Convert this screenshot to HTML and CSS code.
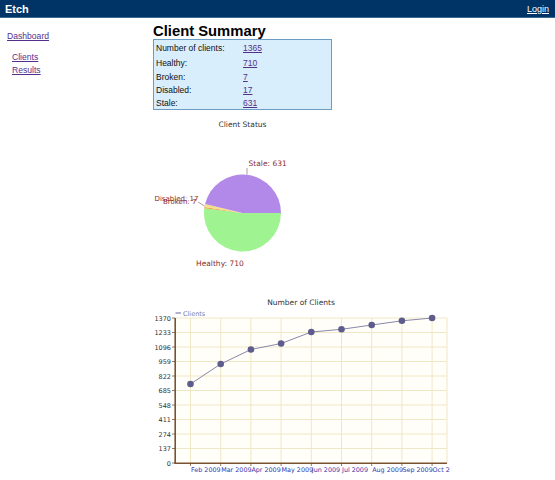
FILE: index.html
```html
<!DOCTYPE html>
<html>
<head>
<meta charset="utf-8">
<title>Etch</title>
<link rel="stylesheet" href="styles.css">
</head>
<body>
<header class="topbar">
  <span class="brand">Etch</span>
  <a class="login" href="#">Login</a>
</header>
<div class="layout">
  <nav class="side">
    <a class="nav-link" href="#">Dashboard</a>
    <ul class="subnav">
      <li><a class="nav-link" href="#">Clients</a></li>
      <li><a class="nav-link" href="#">Results</a></li>
    </ul>
  </nav>
  <main class="main">
    <h2 class="title">Client Summary</h2>
    <div class="summary">
      <div class="row r1"><span>Number of clients:</span><a href="#">1365</a></div>
      <div class="row r2"><span>Healthy:</span><a href="#">710</a></div>
      <div class="row r3"><span>Broken:</span><a href="#">7</a></div>
      <div class="row r4"><span>Disabled:</span><a href="#">17</a></div>
      <div class="row r5"><span>Stale:</span><a href="#">631</a></div>
    </div>
    <svg class="chart" width="297" height="178" viewBox="153 110 297 178">
      <text class="ctitle" x="242.5" y="127" text-anchor="middle">Client Status</text>
      <path d="M242.5 213 L281 213 A38.5 38.5 0 1 1 204.31 208.14 Z" fill="#a0f391"/>
      <path d="M242.5 213 L204.31 208.14 A38.5 38.5 0 0 1 204.49 206.91 Z" fill="#f0a040"/>
      <path d="M242.5 213 L204.49 206.91 A38.5 38.5 0 0 1 205.08 203.95 Z" fill="#f3e08a"/>
      <path d="M242.5 213 L205.08 203.95 A38.5 38.5 0 0 1 281 213 Z" fill="#b288e8"/>
      <line x1="247" y1="174.5" x2="247" y2="168" stroke="#a08080" stroke-width="0.8"/>
      <line x1="198" y1="202" x2="204.5" y2="206" stroke="#a08080" stroke-width="0.8"/>
      <text class="plabel" x="248.5" y="165.5">Stale: 631</text>
      <text class="plabel" x="196" y="266">Healthy: 710</text>
      <text class="plabel small" x="154.5" y="201">Disabled: 17</text>
      <text class="plabel small" x="163" y="203.5">Broken: 7</text>
    </svg>
    <svg class="chart" width="297" height="192" viewBox="153 288 297 192">
      <text class="ctitle" x="301" y="305" text-anchor="middle">Number of Clients</text>
      <line x1="175.5" y1="313" x2="181" y2="313" stroke="#8080aa" stroke-width="1.2"/>
      <text class="legend" x="183" y="315.5">Clients</text>
      <rect x="175" y="318" width="272" height="145" fill="#fffef8"/>
      <g stroke="#f0e7c6" stroke-width="1">
        <line x1="175" y1="318" x2="447" y2="318"/>
        <line x1="175" y1="332.5" x2="447" y2="332.5"/>
        <line x1="175" y1="347" x2="447" y2="347"/>
        <line x1="175" y1="361.5" x2="447" y2="361.5"/>
        <line x1="175" y1="376" x2="447" y2="376"/>
        <line x1="175" y1="390.5" x2="447" y2="390.5"/>
        <line x1="175" y1="405" x2="447" y2="405"/>
        <line x1="175" y1="419.5" x2="447" y2="419.5"/>
        <line x1="175" y1="434" x2="447" y2="434"/>
        <line x1="175" y1="448.5" x2="447" y2="448.5"/>
        <line x1="190.5" y1="318" x2="190.5" y2="463"/>
        <line x1="220.7" y1="318" x2="220.7" y2="463"/>
        <line x1="250.9" y1="318" x2="250.9" y2="463"/>
        <line x1="281.1" y1="318" x2="281.1" y2="463"/>
        <line x1="311.3" y1="318" x2="311.3" y2="463"/>
        <line x1="341.5" y1="318" x2="341.5" y2="463"/>
        <line x1="371.7" y1="318" x2="371.7" y2="463"/>
        <line x1="401.9" y1="318" x2="401.9" y2="463"/>
        <line x1="432.1" y1="318" x2="432.1" y2="463"/>
        <line x1="447" y1="318" x2="447" y2="463"/>
      </g>
      <g stroke="#7a5a3a" stroke-width="0.8">
        <line x1="172" y1="318" x2="175" y2="318"/>
        <line x1="172" y1="332.5" x2="175" y2="332.5"/>
        <line x1="172" y1="347" x2="175" y2="347"/>
        <line x1="172" y1="361.5" x2="175" y2="361.5"/>
        <line x1="172" y1="376" x2="175" y2="376"/>
        <line x1="172" y1="390.5" x2="175" y2="390.5"/>
        <line x1="172" y1="405" x2="175" y2="405"/>
        <line x1="172" y1="419.5" x2="175" y2="419.5"/>
        <line x1="172" y1="434" x2="175" y2="434"/>
        <line x1="172" y1="448.5" x2="175" y2="448.5"/>
        <line x1="172" y1="463" x2="175" y2="463"/>
        <line x1="190.5" y1="463" x2="190.5" y2="466"/>
        <line x1="220.7" y1="463" x2="220.7" y2="466"/>
        <line x1="250.9" y1="463" x2="250.9" y2="466"/>
        <line x1="281.1" y1="463" x2="281.1" y2="466"/>
        <line x1="311.3" y1="463" x2="311.3" y2="466"/>
        <line x1="341.5" y1="463" x2="341.5" y2="466"/>
        <line x1="371.7" y1="463" x2="371.7" y2="466"/>
        <line x1="401.9" y1="463" x2="401.9" y2="466"/>
        <line x1="432.1" y1="463" x2="432.1" y2="466"/>
      </g>
      <g stroke="#7a5230" stroke-width="1.6">
        <line x1="175.2" y1="318" x2="175.2" y2="463.8"/>
        <line x1="174.4" y1="463.2" x2="447" y2="463.2"/>
      </g>
      <g class="ylab" text-anchor="end">
        <text x="171" y="320.5">1370</text>
        <text x="171" y="335">1233</text>
        <text x="171" y="349.5">1096</text>
        <text x="171" y="364">959</text>
        <text x="171" y="378.5">822</text>
        <text x="171" y="393">685</text>
        <text x="171" y="407.5">548</text>
        <text x="171" y="422">411</text>
        <text x="171" y="436.5">274</text>
        <text x="171" y="451">137</text>
        <text x="171" y="465.5">0</text>
      </g>
      <g class="xlab">
        <text x="191" y="471.5">Feb 2009</text>
        <text x="221.2" y="471.5">Mar 2009</text>
        <text x="251.4" y="471.5">Apr 2009</text>
        <text x="281.6" y="471.5">May 2009</text>
        <text x="311.8" y="471.5">Jun 2009</text>
        <text x="342" y="471.5">Jul 2009</text>
        <text x="372.2" y="471.5">Aug 2009</text>
        <text x="402.4" y="471.5">Sep 2009</text>
        <text x="432.6" y="471.5">Oct 2009</text>
      </g>
      <polyline fill="none" stroke="#8888ac" stroke-width="1" points="190.5,384 220.7,364 250.9,349.5 281.1,343.5 311.3,332 341.5,329.3 371.7,325 401.9,320.8 432.1,318"/>
      <g fill="#5e5c8c">
        <circle cx="190.5" cy="384" r="3.3"/>
        <circle cx="220.7" cy="364" r="3.3"/>
        <circle cx="250.9" cy="349.5" r="3.3"/>
        <circle cx="281.1" cy="343.5" r="3.3"/>
        <circle cx="311.3" cy="332" r="3.3"/>
        <circle cx="341.5" cy="329.3" r="3.3"/>
        <circle cx="371.7" cy="325" r="3.3"/>
        <circle cx="401.9" cy="320.8" r="3.3"/>
        <circle cx="432.1" cy="318" r="3.3"/>
      </g>
    </svg>
  </main>
</div>
</body>
</html>
```

FILE: styles.css
```css
html, body {
  margin: 0;
  padding: 0;
  background: #ffffff;
  font-family: "Liberation Sans", Arial, sans-serif;
  overflow: hidden;
}

.topbar {
  display: flex;
  justify-content: space-between;
  align-items: center;
  height: 17px;
  padding: 0 6px 0 5px;
  background: #003366;
  border-bottom: 1px solid #3a6c93;
}

.brand {
  color: #ffffff;
  font-weight: bold;
  font-size: 11px;
}

.login {
  color: #ffffff;
  font-size: 9px;
}

.layout {
  display: flex;
  align-items: flex-start;
}

.side {
  width: 153px;
  flex: none;
  padding-top: 13px;
  box-sizing: border-box;
  padding-left: 7px;
}

.nav-link {
  color: #55308a;
  font-size: 8.6px;
  line-height: 10px;
}

.side > .nav-link {
  display: block;
}

.subnav {
  list-style: none;
  margin: 8px 0 0 5px;
  padding: 0;
}

.subnav li {
  line-height: 12.3px;
}

.main {
  flex: 1;
  min-width: 0;
}

.title {
  margin: 6px 0 0 0;
  font-size: 14.8px;
  line-height: 15px;
  font-weight: bold;
  color: #000000;
}

.summary {
  width: 179px;
  box-sizing: border-box;
  border: 1px solid #6a9cc4;
  background: #d8eefc;
  padding-left: 2px;
  font-size: 8.5px;
  color: #111111;
}

.row {
  display: grid;
  grid-template-columns: 87px auto;
  align-items: center;
}

.row a {
  color: #55308a;
}

.r1 { height: 15.5px; }
.r2 { height: 15px; }
.r3 { height: 13.5px; }
.r4 { height: 12.5px; }
.r5 { height: 12.5px; }

.chart {
  display: block;
}

.ctitle {
  font-family: "DejaVu Sans", sans-serif;
  font-size: 7.5px;
  fill: #333333;
}

.plabel {
  font-family: "DejaVu Sans", sans-serif;
  font-size: 7.5px;
  fill: #8b2b2b;
}

.plabel.small {
  font-size: 7px;
}

.legend {
  font-family: "DejaVu Sans", sans-serif;
  font-size: 6.5px;
  fill: #7a7aa8;
}

.ylab {
  font-family: "DejaVu Sans", sans-serif;
  font-size: 6.5px;
  fill: #333333;
}

.xlab {
  font-family: "DejaVu Sans", sans-serif;
  font-size: 6.4px;
  fill: #3636aa;
}
```
